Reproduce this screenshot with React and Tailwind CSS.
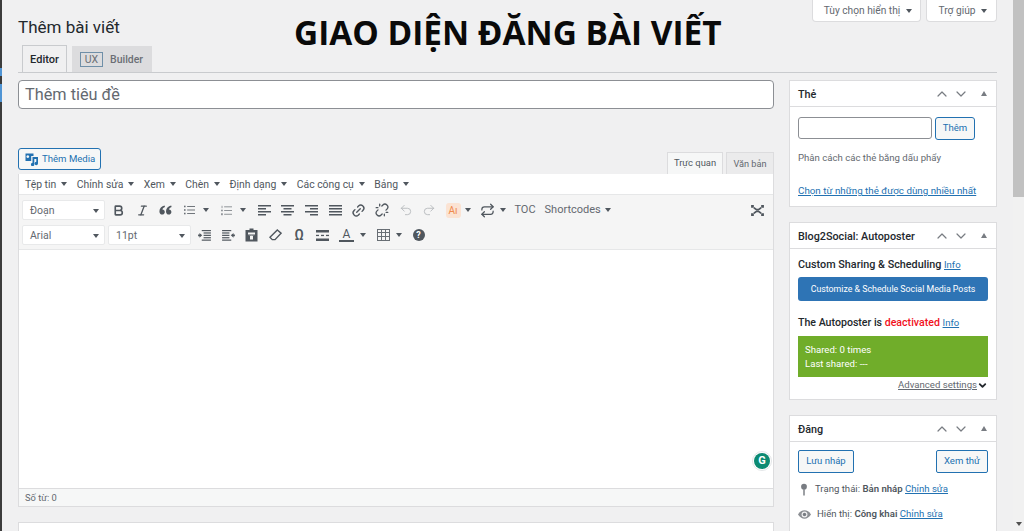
import React from 'react';
import { Bold, Italic, Link2, Unlink, Undo2, Redo2, Repeat, ChevronUp, ChevronDown } from 'lucide-react';

const Caret = ({ className = '' }) => (
    <span className={`inline-block w-0 h-0 border-x-[3.5px] border-x-transparent border-t-[4.5px] border-t-[#50575e] ${className}`}></span>
);

const TinyButton = ({ children, className = '' }) => (
    <div className={`w-[23.6px] h-[20px] shrink-0 flex items-center justify-center text-[#50575e] ${className}`}>{children}</div>
);

const CaretButton = ({ className = '' }) => (
    <div className={`h-[20px] shrink-0 flex items-center justify-center ${className}`}><Caret /></div>
);

const SelectBox = ({ label, width }) => (
    <div className={`${width} h-[20px] pt-[1px] shrink-0 bg-white border border-[#e8e9ea] rounded-[2px] flex items-center justify-between pl-[7px] pr-[5px] text-[10.5px] text-[#646970]`}>
        <span>{label}</span>
        <Caret />
    </div>
);

const MenuItem = ({ label }) => (
    <div className="flex items-center gap-[5px]">
        <span>{label}</span>
        <Caret />
    </div>
);

// toolbar bars, 4 lines with the short ones set by the x values
const AlignIcon = ({ x1, x2 }) => (
    <svg width="13" height="11" viewBox="0 0 13 11" fill="currentColor">
        <rect x="0" y="0" width="13" height="1.5" />
        <rect x={x1} y="3" width={x2} height="1.5" />
        <rect x="0" y="6" width="13" height="1.5" />
        <rect x={x1} y="9" width={x2} height="1.5" />
    </svg>
);

const QuoteIcon = () => (
    <svg width="13" height="10" viewBox="0 0 13 10" fill="currentColor">
        <path d="M5.6 0.4C2.6 1.2 0.4 3 0.4 6.2 0.4 8.4 1.6 9.6 3.2 9.6 4.7 9.6 5.8 8.5 5.8 7 5.8 5.6 4.8 4.6 3.4 4.6 3.6 3.4 4.5 2.6 6 2.1Z" />
        <path d="M12.2 0.4C9.2 1.2 7 3 7 6.2 7 8.4 8.2 9.6 9.8 9.6 11.3 9.6 12.4 8.5 12.4 7 12.4 5.6 11.4 4.6 10 4.6 10.2 3.4 11.1 2.6 12.6 2.1Z" />
    </svg>
);

const BulletIcon = () => (
    <svg width="11" height="10" viewBox="0 0 14 11" fill="currentColor" opacity="0.85">
        <rect x="0" y="0" width="2" height="2" /><rect x="4" y="0.4" width="10" height="1.2" />
        <rect x="0" y="4.5" width="2" height="2" /><rect x="4" y="4.9" width="10" height="1.2" />
        <rect x="0" y="9" width="2" height="2" /><rect x="4" y="9.4" width="10" height="1.2" />
    </svg>
);

const NumberIcon = () => (
    <svg width="11" height="11" viewBox="0 0 14 12" fill="currentColor" opacity="0.7">
        <rect x="0.8" y="0" width="1" height="3" /><rect x="4" y="0.8" width="10" height="1.1" />
        <rect x="0.2" y="5" width="2" height="2" /><rect x="4" y="5.4" width="10" height="1.1" />
        <rect x="0.2" y="9.5" width="2" height="2.5" /><rect x="4" y="10.2" width="10" height="1.1" />
    </svg>
);

const FullscreenIcon = () => (
    <svg width="13" height="11" viewBox="0 0 14 12" fill="none" stroke="currentColor" strokeWidth="1.8">
        <path d="M3 3 L6 5 H8 L11 3" />
        <path d="M3 9 L6 7 H8 L11 9" />
        <rect x="0" y="0" width="3" height="3" fill="currentColor" stroke="none" />
        <rect x="11" y="0" width="3" height="3" fill="currentColor" stroke="none" />
        <rect x="0" y="9" width="3" height="3" fill="currentColor" stroke="none" />
        <rect x="11" y="9" width="3" height="3" fill="currentColor" stroke="none" />
    </svg>
);

const IndentIcon = ({ flip }) => (
    <svg width="13" height="11" viewBox="0 0 14 12" fill="currentColor" className={flip ? '-scale-x-100' : ''}>
        <rect x="4" y="0" width="10" height="1.3" />
        <rect x="6" y="2.6" width="8" height="1.3" />
        <rect x="6" y="5.2" width="8" height="1.3" />
        <rect x="6" y="7.8" width="8" height="1.3" />
        <rect x="4" y="10.4" width="10" height="1.3" />
        <path d="M4.5 5.8 L1.5 3.2 V4.9 H0 V6.7 H1.5 V8.4 Z" />
    </svg>
);

const PasteIcon = () => (
    <svg width="13" height="14" viewBox="0 0 13 14" fill="currentColor">
        <path d="M4.5 0.5H8.5V2H12.5V13.5H0.5V2H4.5ZM3 4.5V6.5H10V4.5ZM5 8V11.5H8V8H10L6.5 7.5 3 8Z" fillRule="evenodd" />
    </svg>
);

const EraserIcon = () => (
    <svg width="13" height="12" viewBox="0 0 14 13" fill="none" stroke="currentColor" strokeWidth="1.5">
        <path d="M9 1 L13 4.5 L6.5 11.5 L3.5 11.5 L1 9 Z" />
    </svg>
);

const HrIcon = () => (
    <svg width="13" height="11" viewBox="0 0 13 11" fill="currentColor">
        <rect x="0" y="0" width="13" height="2.5" />
        <rect x="0" y="4.8" width="3" height="1.3" /><rect x="5" y="4.8" width="3" height="1.3" /><rect x="10" y="4.8" width="3" height="1.3" />
        <rect x="0" y="8.5" width="13" height="2.5" />
    </svg>
);

const TableIcon = () => (
    <svg width="13" height="12" viewBox="0 0 13 12" fill="none" stroke="currentColor" strokeWidth="1" opacity="0.85">
        <rect x="0.5" y="0.5" width="12" height="11" />
        <path d="M0.5 3.5H12.5M0.5 7.5H12.5M4.5 0.5V11.5M8.5 0.5V11.5" />
    </svg>
);

const MediaIcon = () => (
    <svg width="14" height="14" viewBox="0 0 14 14" fill="currentColor">
        <path d="M0.5 1.5H8.5V4H6.2V9H0.5ZM2.8 3.2A1.4 1.4 0 1 0 2.81 3.2Z" fillRule="evenodd" />
        <path d="M7.5 5H13V11.5A1.7 1.7 0 1 1 11.3 9.8V7H9.3V12.5A1.7 1.7 0 1 1 7.5 10.8Z" />
    </svg>
);

const PinIcon = () => (
    <svg width="8" height="13" viewBox="0 0 10 15" fill="#787c82" className="ml-[2px] mr-[7px]">
        <circle cx="5" cy="4" r="3.6" />
        <rect x="4.1" y="7" width="1.8" height="8" />
    </svg>
);

const EyeIcon = () => (
    <svg width="13" height="9" viewBox="0 0 15 10" className="mr-[6px]">
        <path d="M0 5C2 1.8 4.6 0.2 7.5 0.2 10.4 0.2 13 1.8 15 5 13 8.2 10.4 9.8 7.5 9.8 4.6 9.8 2 8.2 0 5Z" fill="#8c8f94" />
        <circle cx="7.5" cy="5" r="3.4" fill="#f0f0f1" />
        <circle cx="7.5" cy="5" r="2" fill="#787c82" />
    </svg>
);

const Metabox = ({ title, children }) => (
    <div className="bg-white border border-[#dcdcde]">
        <div className="h-[26px] border-b border-[#dcdcde] flex items-center justify-between pl-[8px] pr-[9px]">
            <span className="pt-[3px] text-[10.8px] font-medium text-[#23282d]">{title}</span>
            <div className="flex items-center text-[#787c82]">
                <ChevronUp size={16} strokeWidth={1.8} className="mr-[3px]" />
                <ChevronDown size={16} strokeWidth={1.8} className="mr-[12px]" />
                <span className="inline-block w-0 h-0 border-x-[3.5px] border-x-transparent border-b-[5px] border-b-[#787c82]"></span>
            </div>
        </div>
        {children}
    </div>
);

const App = () => {
    return (
        <div className="relative w-[1024px] h-[531px] overflow-hidden flex bg-[#f0f0f1] text-[#3c434a]" style={{ fontFamily: 'Roboto, "Noto Sans", sans-serif' }}>
            {/* Admin menu edge */}
            <div className="w-[2px] h-full bg-[#3c3c3c] shrink-0 flex flex-col pt-[68px] gap-[8px]">
                <div className="h-[8px] bg-[#4f94d4]"></div>
                <div className="h-[18px] bg-[#4f94d4]"></div>
            </div>

            {/* Main page */}
            <div className="w-[1011px] shrink-0 pl-[16px] pr-[16px]">
                <div className="relative h-[46px]">
                    <div className="absolute left-0 top-[15px] text-[17px] leading-[24px] text-[#23282d]">Thêm bài viết</div>
                    <div className="flex justify-end h-[22px] gap-[5px]">
                        <div className="w-[109px] pl-[3px] bg-white border border-t-0 border-[#dcdcde] rounded-b-[4px] flex items-center justify-center gap-[6px] text-[10.2px] text-[#646970]">
                            <span>Tùy chọn hiển thị</span><Caret />
                        </div>
                        <div className="w-[71px] pl-[3px] bg-white border border-t-0 border-[#dcdcde] rounded-b-[4px] flex items-center justify-center gap-[6px] text-[10.2px] text-[#646970]">
                            <span>Trợ giúp</span><Caret />
                        </div>
                    </div>
                </div>

                {/* Tabs */}
                <div className="h-[27px] border-b border-[#c9cbce] flex items-end pl-[4px] gap-[5px]">
                    <div className="w-[45px] h-[27px] pt-[2px] bg-[#f0f0f1] border border-b-0 border-[#c9cbce] flex items-center justify-center text-[11px] font-medium text-[#23282d]">Editor</div>
                    <div className="w-[80px] h-[26px] pt-[1px] bg-[#dcdcde] flex items-center pl-[8px] gap-[7px] text-[10.5px] font-medium text-[#6b6f75]">
                        <span className="w-[23px] h-[15px] border border-[#6f8fa8] flex items-center justify-center font-normal">UX</span>
                        <span>Builder</span>
                    </div>
                </div>

                <div className="flex mt-[7px] gap-[15px]">
                    {/* Editor column */}
                    <div className="w-[756px] shrink-0">
                        <div className="h-[29px] pt-[1px] bg-white border border-[#8c8f94] rounded-[4px] flex items-center pl-[6px] text-[16.3px] text-[#646970]">Thêm tiêu đề</div>

                        <div className="mt-[39px] h-[26px] flex justify-between">
                            <div className="w-[83px] h-[22px] bg-[#f6f7f7] border border-[#2271b1] rounded-[3px] flex items-center pl-[6px] gap-[3px] text-[9.6px] text-[#2271b1] whitespace-nowrap">
                                <MediaIcon />
                                <span>Thêm Media</span>
                            </div>
                            <div className="flex items-end gap-[3px]">
                                <div className="w-[56px] h-[22px] bg-[#f6f7f7] border border-b-0 border-[#dcdcde] flex items-center justify-center text-[9.4px] text-[#50575e]">Trực quan</div>
                                <div className="w-[48px] h-[22px] bg-[#ebebec] border border-b-0 border-[#dcdcde] flex items-center justify-center text-[9.2px] text-[#646970]">Văn bản</div>
                            </div>
                        </div>

                        <div className="border border-[#dcdcde] border-t-0">
                            {/* Menu bar */}
                            <div className="h-[20px] pt-[1px] bg-white flex items-center pl-[6px] gap-[9.5px] text-[10.4px] text-[#50575e]">
                                <MenuItem label="Tệp tin" />
                                <MenuItem label="Chỉnh sửa" />
                                <MenuItem label="Xem" />
                                <MenuItem label="Chèn" />
                                <MenuItem label="Định dạng" />
                                <MenuItem label="Các công cụ" />
                                <MenuItem label="Bảng" />
                            </div>

                            {/* Toolbar */}
                            <div className="h-[56px] bg-[#f5f5f5] border-t border-b border-[#e6e7e8] pt-[5px] pl-[3px] pr-[4px] flex flex-col gap-[5px]">
                                <div className="flex items-center h-[20px]">
                                    <SelectBox label="Đoạn" width="w-[83px]" />
                                    <TinyButton className="ml-[2px]"><Bold size={13} strokeWidth={3} /></TinyButton>
                                    <TinyButton><Italic size={13} strokeWidth={2.4} /></TinyButton>
                                    <TinyButton><QuoteIcon /></TinyButton>
                                    <TinyButton><BulletIcon /></TinyButton>
                                    <CaretButton className="w-[10px]" />
                                    <TinyButton className="ml-[3.5px]"><NumberIcon /></TinyButton>
                                    <CaretButton className="w-[10px]" />
                                    <TinyButton className="ml-[4px]"><AlignIcon x1={0} x2={8} /></TinyButton>
                                    <TinyButton><AlignIcon x1={2.5} x2={8} /></TinyButton>
                                    <TinyButton><AlignIcon x1={5} x2={8} /></TinyButton>
                                    <TinyButton><AlignIcon x1={0} x2={13} /></TinyButton>
                                    <TinyButton><Link2 size={15} strokeWidth={2.2} className="-rotate-45" /></TinyButton>
                                    <TinyButton><Unlink size={14} strokeWidth={2.2} /></TinyButton>
                                    <TinyButton className="text-[#b4b7ba]"><Undo2 size={14} strokeWidth={1.5} /></TinyButton>
                                    <TinyButton className="text-[#b4b7ba]"><Redo2 size={14} strokeWidth={1.5} /></TinyButton>
                                    <TinyButton>
                                        <span className="w-[15px] h-[15px] rounded-[3px] bg-[#fbe3d3] text-[#ef8a4d] text-[10px] leading-[15px] text-center">Aı</span>
                                    </TinyButton>
                                    <CaretButton className="w-[7px]" />
                                    <TinyButton className="ml-[4px]"><Repeat size={15} /></TinyButton>
                                    <CaretButton className="w-[7px]" />
                                    <span className="ml-[8px] text-[11px] text-[#646970]">TOC</span>
                                    <span className="ml-[9px] text-[11px] text-[#646970]">Shortcodes</span>
                                    <Caret className="ml-[4px]" />
                                    <TinyButton className="ml-auto"><FullscreenIcon /></TinyButton>
                                </div>
                                <div className="flex items-center h-[20px]">
                                    <SelectBox label="Arial" width="w-[83px]" />
                                    <div className="ml-[3px]"><SelectBox label="11pt" width="w-[83px]" /></div>
                                    <TinyButton className="ml-[2px]"><IndentIcon /></TinyButton>
                                    <TinyButton><IndentIcon flip /></TinyButton>
                                    <TinyButton><PasteIcon /></TinyButton>
                                    <TinyButton><EraserIcon /></TinyButton>
                                    <TinyButton><span className="text-[14px] font-medium leading-[14px]">Ω</span></TinyButton>
                                    <TinyButton><HrIcon /></TinyButton>
                                    <TinyButton>
                                        <span className="block leading-[12px] text-[12px] text-center border-b-[2px] border-[#50575e] w-[15px]">A</span>
                                    </TinyButton>
                                    <CaretButton className="w-[10px]" />
                                    <TinyButton className="ml-[4px]"><TableIcon /></TinyButton>
                                    <CaretButton className="w-[7px]" />
                                    <TinyButton className="ml-[4px]">
                                        <span className="w-[12px] h-[12px] rounded-full bg-[#50575e] text-white text-[9px] font-bold leading-[12px] text-center">?</span>
                                    </TinyButton>
                                </div>
                            </div>

                            {/* Writing area */}
                            <div className="relative h-[238px] bg-white">
                                <div className="absolute right-[1px] bottom-[17px] w-[20px] h-[20px] rounded-full bg-white border border-[#e4e6e8] flex items-center justify-center">
                                    <span className="w-[16px] h-[16px] rounded-full bg-[#0c8a72] text-white text-[11px] font-bold leading-[16px] text-center">G</span>
                                </div>
                            </div>

                            {/* Status bar */}
                            <div className="h-[18px] bg-[#f6f7f7] border-t border-[#dcdcde] flex items-center pl-[6px] text-[9.3px] text-[#646970]">Số từ: 0</div>
                        </div>

                        <div className="mt-[15px] h-[40px] bg-white border border-[#dcdcde]"></div>
                    </div>

                    {/* Sidebar */}
                    <div className="w-[208px] shrink-0 flex flex-col gap-[15px]">
                        <Metabox title="Thẻ">
                            <div className="h-[99px] pt-[10px] px-[8px]">
                                <div className="flex gap-[3px]">
                                    <div className="w-[134px] h-[22px] bg-white border border-[#8c8f94] rounded-[3px]"></div>
                                    <div className="w-[40px] h-[23px] bg-[#f6f7f7] border border-[#2271b1] rounded-[3px] flex items-center justify-center text-[9.6px] text-[#2271b1]">Thêm</div>
                                </div>
                                <div className="mt-[11px] text-[9.6px] leading-[14px] text-[#646970]">Phân cách các thẻ bằng dấu phẩy</div>
                                <div className="mt-[19px] text-[9.8px] leading-[14px] text-[#2271b1] underline">Chọn từ những thẻ được dùng nhiều nhất</div>
                            </div>
                        </Metabox>

                        <Metabox title="Blog2Social: Autoposter">
                            <div className="h-[150px] px-[8px] pt-[8px]">
                                <div className="text-[10.8px] leading-[15px] font-medium text-[#23282d]">Custom Sharing &amp; Scheduling <span className="text-[9.5px] font-normal text-[#2271b1] underline">Info</span></div>
                                <div className="mt-[5px] h-[24px] pt-[1px] bg-[#2e74b5] rounded-[3px] flex items-center justify-center text-[8.8px] text-white">Customize &amp; Schedule Social Media Posts</div>
                                <div className="mt-[14px] text-[10.6px] leading-[15px] font-medium text-[#23282d]">The Autoposter is <span className="font-medium text-[#f1101c]">deactivated</span> <span className="text-[9.5px] font-normal text-[#2271b1] underline">Info</span></div>
                                <div className="mt-[6px] h-[41px] bg-[#70ad2a] pl-[7px] pt-[7px] text-[9.6px] leading-[14px] text-white">
                                    <div>Shared: 0 times</div>
                                    <div>Last shared: ---</div>
                                </div>
                                <div className="mt-[1px] flex justify-end items-center text-[9.6px] leading-[14px] text-[#646970]">
                                    <span className="underline">Advanced settings</span>
                                    <ChevronDown size={11} strokeWidth={4} className="text-[#23282d]" />
                                </div>
                            </div>
                        </Metabox>

                        <Metabox title="Đăng">
                            <div className="h-[100px] px-[8px] pt-[8px]">
                                <div className="flex justify-between">
                                    <div className="w-[56px] h-[23px] bg-[#f6f7f7] border border-[#2271b1] rounded-[2px] flex items-center justify-center text-[9.5px] text-[#2271b1]">Lưu nháp</div>
                                    <div className="w-[52px] h-[23px] bg-[#f6f7f7] border border-[#2271b1] rounded-[2px] flex items-center justify-center text-[9.6px] text-[#2271b1]">Xem thử</div>
                                </div>
                                <div className="mt-[8px] flex items-center h-[16px] text-[9.6px] text-[#50575e]">
                                    <PinIcon />
                                    <span>Trạng thái: <b className="font-semibold">Bản nháp</b> <span className="text-[#2271b1] underline">Chỉnh sửa</span></span>
                                </div>
                                <div className="mt-[9px] flex items-center h-[16px] text-[9.6px] text-[#50575e]">
                                    <EyeIcon />
                                    <span>Hiển thị: <b className="font-semibold">Công khai</b> <span className="text-[#2271b1] underline">Chỉnh sửa</span></span>
                                </div>
                            </div>
                        </Metabox>
                    </div>
                </div>
            </div>

            {/* Scrollbar */}
            <div className="w-[11px] h-full shrink-0 bg-[#f1f1f1] flex flex-col justify-between">
                <div className="h-[197px] bg-[#c1c1c1]"></div>
                <div className="h-[14px] flex items-center justify-center"><span className="inline-block w-0 h-0 border-x-[3px] border-x-transparent border-t-[4px] border-t-[#505050]"></span></div>
            </div>

            {/* Banner text over the page */}
            <div className="absolute left-[294px] top-[10px] text-[33.4px] leading-[44px] font-bold text-[#0a0a0a] whitespace-nowrap" style={{ fontFamily: '"Open Sans", sans-serif' }}>GIAO DIỆN ĐĂNG BÀI VIẾT</div>
        </div>
    );
};

export default App;
